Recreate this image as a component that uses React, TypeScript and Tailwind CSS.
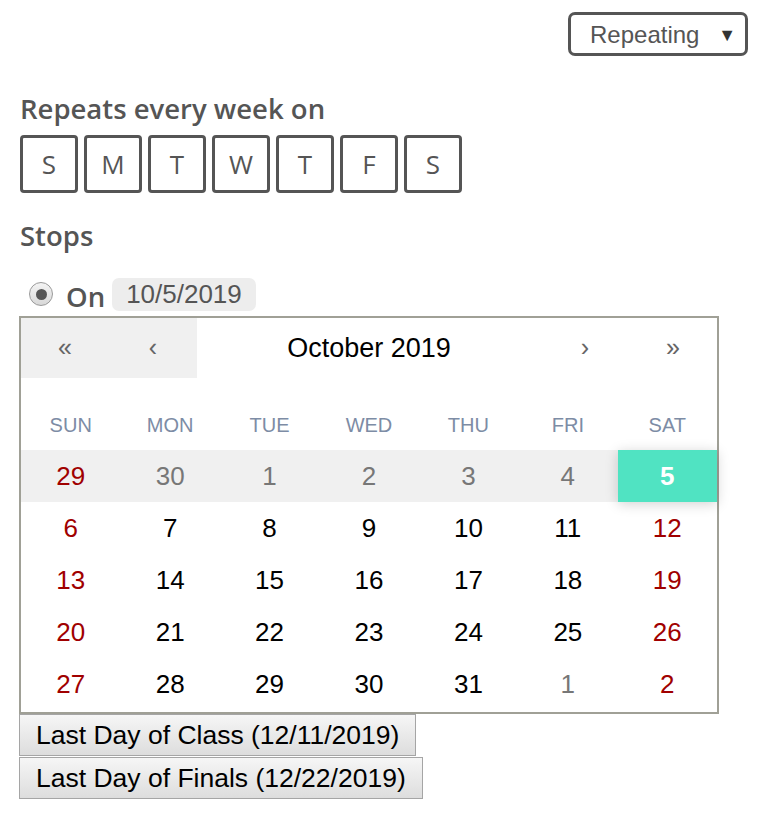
const weekdays = ["SUN", "MON", "TUE", "WED", "THU", "FRI", "SAT"];

type Tile = { n: number; kind: "weekend" | "neighbor" | "normal" | "active" };

const weeks: Tile[][] = [
  [
    { n: 29, kind: "weekend" },
    { n: 30, kind: "neighbor" },
    { n: 1, kind: "neighbor" },
    { n: 2, kind: "neighbor" },
    { n: 3, kind: "neighbor" },
    { n: 4, kind: "neighbor" },
    { n: 5, kind: "active" },
  ],
  [6, 7, 8, 9, 10, 11, 12].map((n, i) => ({ n, kind: i === 0 || i === 6 ? "weekend" : "normal" })),
  [13, 14, 15, 16, 17, 18, 19].map((n, i) => ({ n, kind: i === 0 || i === 6 ? "weekend" : "normal" })),
  [20, 21, 22, 23, 24, 25, 26].map((n, i) => ({ n, kind: i === 0 || i === 6 ? "weekend" : "normal" })),
  [
    { n: 27, kind: "weekend" },
    { n: 28, kind: "normal" },
    { n: 29, kind: "normal" },
    { n: 30, kind: "normal" },
    { n: 31, kind: "normal" },
    { n: 1, kind: "neighbor" },
    { n: 2, kind: "weekend" },
  ],
];

const tileColor = {
  weekend: "text-[#a00000]",
  neighbor: "text-[#777777]",
  normal: "text-black",
  active: "text-white font-bold bg-[#50e3c2] shadow-[0_2px_12px_rgba(0,0,0,0.18)]",
};

export default function App() {
  return (
    <div className="w-[760px] h-[823px] bg-white font-['Liberation_Sans',Arial,sans-serif]">
      <div className="flex justify-end pt-[12px] pr-[12px]">
        <div className="w-[180px] h-[44px] border-[3px] border-[#555] rounded-[7px] flex items-center justify-between pl-[19px] pr-[9px] pt-[2px] text-[24px] text-[#555]">
          <span>Repeating</span>
          <span className="text-[18px] text-[#333]">▼</span>
        </div>
      </div>

      <div className="px-[20px] font-['Open_Sans',sans-serif] text-[#555]">
        <p className="mt-[37px] text-[27.5px] font-semibold leading-[32px]">Repeats every week on</p>
        <div className="mt-[10px] flex gap-[6px]">
          {["S", "M", "T", "W", "T", "F", "S"].map((d, i) => (
            <div
              key={i}
              className="w-[58px] h-[58px] border-[3px] border-[#555] rounded-[4px] flex items-center justify-center text-[26px]"
            >
              {d}
            </div>
          ))}
        </div>
        <p className="mt-[27px] text-[27.5px] font-semibold leading-[32px]">Stops</p>
        <div className="mt-[25px] ml-[9px] flex items-center h-[34px]">
          <div className="w-[24px] h-[24px] rounded-full border border-[#9a9a9a] bg-gradient-to-b from-[#f4f4f4] to-[#d8d8d8] flex items-center justify-center">
            <div className="w-[11px] h-[11px] rounded-full bg-[#555]" />
          </div>
          <span className="ml-[13px] text-[27.5px] font-semibold mt-[6px]">On</span>
          <span className="ml-[7px] h-[33px] px-[14px] rounded-[7px] bg-[#ededed] text-[26px] leading-[33px] font-['Liberation_Sans',Arial,sans-serif]">
            10/5/2019
          </span>
        </div>
      </div>

      <div className="ml-[19px] mt-[5px] w-[700px] border-2 border-[#a0a096] bg-white pb-[2px]">
        <div className="flex h-[60px] text-[#666] text-[25px]">
          <div className="w-[88px] bg-[#f0f0f0] flex items-center justify-center">«</div>
          <div className="w-[88px] bg-[#f0f0f0] flex items-center justify-center">‹</div>
          <div className="flex-1 flex items-center justify-center text-black text-[27px]">October 2019</div>
          <div className="w-[88px] flex items-center justify-center">›</div>
          <div className="w-[88px] flex items-center justify-center">»</div>
        </div>
        <div className="grid grid-cols-7 h-[72px] pt-[22px]">
          {weekdays.map((w) => (
            <div key={w} className="flex items-center justify-center text-[20px] text-[#7d8ca5]">
              {w}
            </div>
          ))}
        </div>
        {weeks.map((week, wi) => (
          <div key={wi} className={`grid grid-cols-7 h-[52px] ${wi === 0 ? "bg-[#f0f0f0]" : ""}`}>
            {week.map((t, ti) => (
              <div key={ti} className={`flex items-center justify-center text-[26px] ${tileColor[t.kind]}`}>
                {t.n}
              </div>
            ))}
          </div>
        ))}
      </div>

      <div className="ml-[19px] flex flex-col items-start gap-[1px]">
        {["Last Day of Class (12/11/2019)", "Last Day of Finals (12/22/2019)"].map((b) => (
          <button
            key={b}
            className="h-[42px] px-[16px] border border-[#a5a5a5] bg-gradient-to-b from-[#f6f6f6] to-[#dddddd] text-[26.5px] text-black leading-[40px]"
          >
            {b}
          </button>
        ))}
      </div>
    </div>
  );
}
